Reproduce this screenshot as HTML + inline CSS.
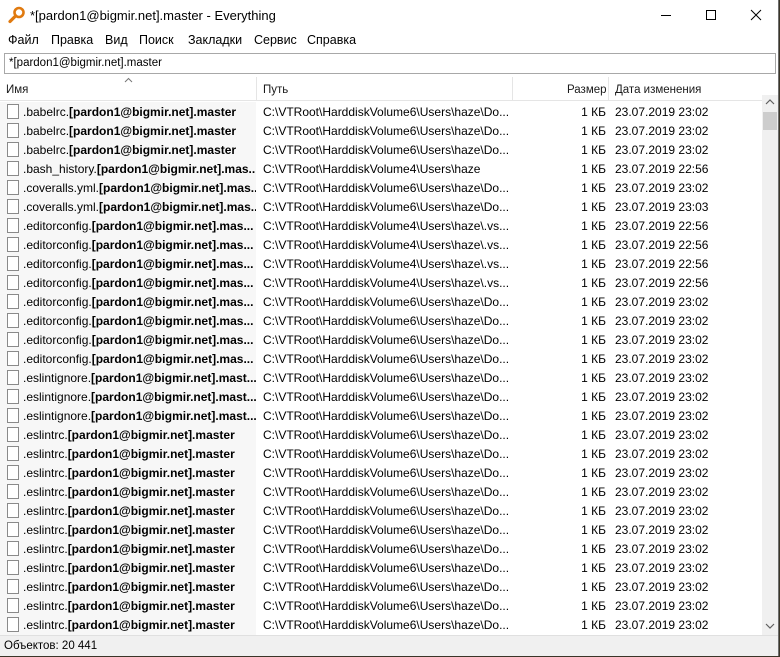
<!DOCTYPE html>
<html><head><meta charset="utf-8"><style>
*{margin:0;padding:0;box-sizing:border-box}
body{width:780px;height:657px;background:#3a3528;font-family:"Liberation Sans",sans-serif;font-size:12px;color:#000;overflow:hidden;position:relative}
#win{position:absolute;left:0;top:0;width:779px;height:656px;background:#fff;border:1px solid #6e6e6e;border-top:none;border-left:none}
.title{position:absolute;left:0;top:0;height:31px;width:778px;background:#fff}
.title .t{position:absolute;left:30px;top:8px;font-size:13px}
.menu{position:absolute;top:33px;left:0;height:18px}
.menu span{position:absolute;top:0;font-size:12.5px}
.search{position:absolute;left:4px;top:53px;width:772px;height:21px;border:1px solid #a8a8a8;padding:3px 4px;font-size:11.5px}
.hdr{position:absolute;top:77px;left:0;width:762px;height:24px;border-bottom:1px solid #e5e5e5;background:#fff}
.hdr span{position:absolute;top:6px;color:#1a1a1a;font-size:11.5px}
.hdr i{position:absolute;top:0;width:1px;height:24px;background:#e5e5e5}
.namebg{position:absolute;left:0;top:102px;width:256px;height:533px;background:#f7f7f7}
.row{position:absolute;left:0;height:19px;width:762px;font-size:12px;white-space:nowrap}
.row .n{position:absolute;left:23px;top:3px;width:233px;overflow:hidden}
.row .ic{position:absolute;left:7px;top:2px;width:12px;height:15px;border:1px solid #8a8a8a;background:#fff}
.row .p{position:absolute;left:263px;top:3px}
.row .s{position:absolute;right:156px;top:3px}
.row .d{position:absolute;left:615px;top:3px}
.sb{position:absolute;left:762px;top:95px;width:16px;height:540px;background:#f0f0f0}
.thumb{position:absolute;left:763px;top:112px;width:14px;height:18px;background:#cdcdcd}
.status{position:absolute;left:0;top:635px;width:778px;height:21px;background:#f0f0f0;border-top:1px solid #e0e0e0}
.status span{position:absolute;left:4px;top:4px;font-size:11.5px}
</style></head><body><div id="win">
<div class="title">
<svg style="position:absolute;left:8px;top:6px" width="18" height="18" viewBox="0 0 18 18"><circle cx="11" cy="6.5" r="4.5" fill="none" stroke="#e07a10" stroke-width="2.6"/><line x1="7.5" y1="10" x2="2" y2="15.5" stroke="#e07a10" stroke-width="3.2" stroke-linecap="round"/></svg>
<span class="t">*[pardon1@bigmir.net].master - Everything</span>
<svg style="position:absolute;left:660px;top:8px" width="110" height="16"><line x1="1" y1="7.5" x2="11" y2="7.5" stroke="#000"/><rect x="46.5" y="2.5" width="9" height="9" fill="none" stroke="#000"/><path d="M91 2 L101 12 M101 2 L91 12" stroke="#000"/></svg>
</div>
<div class="menu"><span style="left:8px">Файл</span><span style="left:51px">Правка</span><span style="left:105px">Вид</span><span style="left:139px">Поиск</span><span style="left:188px">Закладки</span><span style="left:254px">Сервис</span><span style="left:307px">Справка</span></div>
<div class="search">*[pardon1@bigmir.net].master</div>
<div class="hdr"><svg style="position:absolute;left:124px;top:0" width="9" height="6"><path d="M1 5 L4.5 1.5 L8 5" fill="none" stroke="#777"/></svg><span style="left:6px;top:7px">Имя</span><i style="left:256px"></i><span style="left:263px;top:7px">Путь</span><i style="left:512px"></i><span style="left:567px;top:7px">Размер</span><i style="left:608px"></i><span style="left:615px;top:7px">Дата изменения</span></div>
<div class="namebg"></div>
<div id="rows"></div>
<div class="sb"><svg style="position:absolute;left:3px;top:4px" width="10" height="6"><path d="M1 5 L5 1 L9 5" fill="none" stroke="#606060" stroke-width="1.2"/></svg><svg style="position:absolute;left:3px;top:528px" width="10" height="6"><path d="M1 1 L5 5 L9 1" fill="none" stroke="#606060" stroke-width="1.2"/></svg></div>
<div class="thumb"></div>
<div class="status"><span>Объектов: 20 441</span></div>
</div>
<script>
var V6="C:\\VTRoot\\HarddiskVolume6\\Users\\haze\\Do...",V4="C:\\VTRoot\\HarddiskVolume4\\Users\\haze";
var R=[];
function a(n,c,b,p,d){for(var i=0;i<c;i++)R.push([n,b,p,d]);}
a(".babelrc.",3,"[pardon1@bigmir.net].master",V6,"23:02");
a(".bash_history.",1,"[pardon1@bigmir.net].mas...",V4,"22:56");
a(".coveralls.yml.",1,"[pardon1@bigmir.net].mas...",V6,"23:02");
a(".coveralls.yml.",1,"[pardon1@bigmir.net].mas...",V6,"23:03");
a(".editorconfig.",4,"[pardon1@bigmir.net].mas...",V4+"\\.vs...","22:56");
a(".editorconfig.",4,"[pardon1@bigmir.net].mas...",V6,"23:02");
a(".eslintignore.",3,"[pardon1@bigmir.net].mast...",V6,"23:02");
a(".eslintrc.",11,"[pardon1@bigmir.net].master",V6,"23:02");
var h="";R.forEach(function(r,i){h+='<div class="row" style="top:'+(102+i*19)+'px"><div class="ic"></div><div class="n">'+r[0]+'<b>'+r[1]+'</b></div><div class="p">'+r[2]+'</div><div class="s">1 КБ</div><div class="d">23.07.2019 '+r[3]+'</div></div>';});
document.getElementById("rows").innerHTML=h;
</script>
</body></html>
